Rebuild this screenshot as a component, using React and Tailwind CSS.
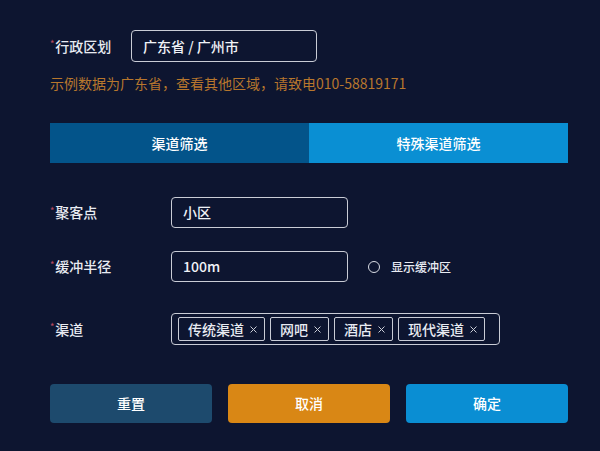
import React, { useState } from 'react';

const FONT = { fontFamily: '"Microsoft YaHei", "Noto Sans CJK SC", "Noto Sans", sans-serif' };

const Label = ({ text, width }) => (
  <div className={`flex items-center shrink-0 whitespace-nowrap text-[14px] font-medium text-[#e8ebf2] ${width}`}>
    <span className="text-[9px] text-[#b3475f] -mt-[4px] mr-[1px]">*</span>
    <span>{text}</span>
  </div>
);

const Tag = ({ text, onRemove }) => (
  <div className="flex items-center shrink-0 whitespace-nowrap h-[24px] pl-[9px] pr-[7px] border border-[#c9ccd6] rounded-[2px] text-[14px] font-medium text-[#e8ebf2]">
    <span>{text}</span>
    <button onClick={onRemove} className="ml-[6px] flex items-center">
      <svg width="7" height="7" viewBox="0 0 7 7" fill="none" stroke="#c9ccd6" strokeWidth="1">
        <path d="M0.5 0.5L6.5 6.5M6.5 0.5L0.5 6.5" />
      </svg>
    </button>
  </div>
);

export default function App() {
  const [tab, setTab] = useState(0);
  const [tags, setTags] = useState(['传统渠道', '网吧', '酒店', '现代渠道']);
  const [showBuffer, setShowBuffer] = useState(false);

  return (
    <div className="w-[600px] h-[451px] bg-[#0d1530] pl-[50px] pt-[30px]" style={FONT}>
      <div className="w-[518px]">
        <div className="flex items-center h-[32px]">
          <Label text="行政区划" width="w-[81px]" />
          <div className="w-[186px] h-[32px] border border-[#c9ccd6] rounded-[4px] flex items-center pl-[11px] text-[14px] font-medium text-[#f0f2f7]">
            广东省 / 广州市
          </div>
        </div>

        <div className="mt-[11px] h-[20px] leading-[20px] text-[14px] text-[#b8772d] whitespace-nowrap">
          示例数据为广东省，查看其他区域，请致电010-58819171
        </div>

        <div className="mt-[30px] flex h-[40px]">
          <button
            onClick={() => setTab(0)}
            className="flex-1 flex items-center justify-center text-[14px] font-medium text-white bg-[#03548a]"
          >
            渠道筛选
          </button>
          <button
            onClick={() => setTab(1)}
            className="flex-1 flex items-center justify-center text-[14px] font-medium text-white bg-[#0a8fd3]"
          >
            特殊渠道筛选
          </button>
        </div>

        <div className="mt-[34px] flex items-center h-[31px]">
          <Label text="聚客点" width="w-[121px]" />
          <div className="w-[177px] h-[31px] border border-[#c9ccd6] rounded-[4px] flex items-center pl-[11px] text-[14px] font-medium text-[#f0f2f7]">
            小区
          </div>
        </div>

        <div className="mt-[23px] flex items-center h-[31px]">
          <Label text="缓冲半径" width="w-[121px]" />
          <div className="w-[177px] h-[31px] border border-[#c9ccd6] rounded-[4px] flex items-center pl-[11px] text-[14px] font-medium text-[#f0f2f7]">
            100m
          </div>
          <button onClick={() => setShowBuffer(!showBuffer)} className="ml-[20px] flex items-center">
            <span className="w-[12px] h-[12px] rounded-full border-[1.5px] border-[#d9dce4] flex items-center justify-center">
              {showBuffer && <span className="w-[6px] h-[6px] rounded-full bg-[#d9dce4]" />}
            </span>
            <span className="ml-[11px] text-[12px] font-medium text-[#e8ebf2]">显示缓冲区</span>
          </button>
        </div>

        <div className="mt-[31px] flex items-center h-[32px]">
          <Label text="渠道" width="w-[121px]" />
          <div className="w-[329px] h-[32px] border border-[#c9ccd6] rounded-[4px] flex items-center pl-[6px] gap-[5px] overflow-hidden">
            {tags.map((t) => (
              <Tag key={t} text={t} onRemove={() => setTags(tags.filter((x) => x !== t))} />
            ))}
          </div>
        </div>

        <div className="mt-[39px] flex gap-[16px]">
          <button className="flex-1 h-[39px] rounded-[4px] bg-[#1d4a6d] text-[14px] font-medium text-white">重置</button>
          <button className="flex-1 h-[39px] rounded-[4px] bg-[#d98715] text-[14px] font-medium text-white">取消</button>
          <button className="flex-1 h-[39px] rounded-[4px] bg-[#0a8ed3] text-[14px] font-medium text-white">确定</button>
        </div>
      </div>
    </div>
  );
}
